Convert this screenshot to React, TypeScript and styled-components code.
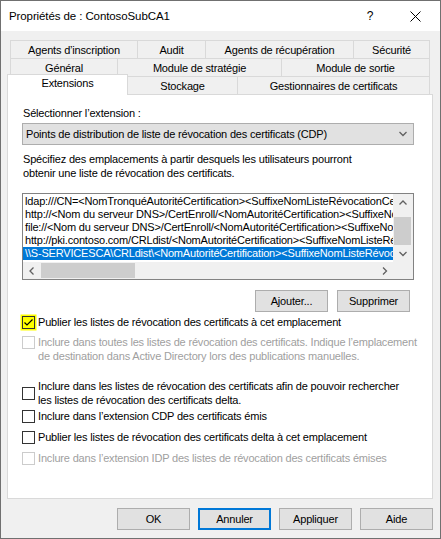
import React from 'react';
import styled, { createGlobalStyle, css } from 'styled-components';

const face = '#f0f0f0';
const line = '#d9d9d9';
const btnFace = '#e1e1e1';
const btnLine = '#adadad';
const accent = '#0078d7';
const grayText = '#a0a0a0';

const Global = createGlobalStyle`
  html, body {
    margin: 0;
    padding: 0;
    background: #ffffff;
  }
  body {
    font-family: "Liberation Sans", Arial, sans-serif;
    font-size: 11px;
    letter-spacing: -0.18px;
    color: #000;
  }
`;

const Window = styled.div`
  width: 441px;
  height: 539px;
  box-sizing: border-box;
  border: 1px solid #707070;
  background: ${face};
  display: flex;
  flex-direction: column;
`;

const TitleBar = styled.div`
  height: 30px;
  flex: none;
  background: #fff;
  display: flex;
  align-items: center;
  padding-left: 8px;
`;

const Title = styled.span`
  flex: 1;
  font-size: 11.5px;
  letter-spacing: -0.1px;
`;

const Help = styled.span`
  width: 40px;
  text-align: center;
  font-size: 12px;
`;

const CloseBtn = styled.span`
  width: 50px;
  display: flex;
  justify-content: center;
  align-items: center;
`;

const Body = styled.div`
  padding: 9px 7px 0 6px;
  display: flex;
  flex-direction: column;
`;

const TabRow = styled.div<{ $inset: number }>`
  display: flex;
  height: 18px;
  margin-left: ${p => p.$inset}px;
`;

const Tab = styled.div<{ $w: number; $active?: boolean }>`
  width: ${p => p.$w}px;
  box-sizing: border-box;
  height: 18px;
  border-top: 1px solid ${line};
  border-right: 1px solid ${line};
  background: ${face};
  display: flex;
  align-items: center;
  justify-content: center;
  white-space: nowrap;
  &:first-child {
    border-left: 1px solid ${line};
  }
  ${p =>
    p.$active &&
    css`
      height: 21px;
      margin-top: -2px;
      margin-bottom: -1px;
      padding-bottom: 4px;
      background: #fff;
      position: relative;
      z-index: 1;
    `}
`;

const Panel = styled.div`
  height: 405px;
  box-sizing: border-box;
  background: #fff;
  border: 1px solid ${line};
  padding: 11px 0 0 14px;
  display: flex;
  flex-direction: column;
  overflow: hidden;
`;

const Label = styled.div`
  line-height: 15px;
  padding-left: 1px;
  white-space: nowrap;
`;

const Combo = styled.div`
  width: 392px;
  height: 22px;
  margin-top: 2px;
  box-sizing: border-box;
  border: 1px solid ${btnLine};
  background: ${btnFace};
  display: flex;
  align-items: center;
  padding: 0 6px 0 3px;
  white-space: nowrap;
  svg {
    margin-left: auto;
  }
`;

const Para = styled.div`
  margin-top: 7px;
  line-height: 14px;
  padding-left: 1px;
  white-space: nowrap;
`;

const ListBox = styled.div`
  width: 392px;
  height: 87px;
  margin-top: 13px;
  box-sizing: border-box;
  border: 1px solid #828282;
  display: grid;
  grid-template-columns: minmax(0, 1fr) 20px;
  grid-template-rows: minmax(0, 1fr) 17px;
`;

const Items = styled.div`
  padding-top: 1px;
  overflow: hidden;
  min-width: 0;
`;

const Item = styled.div<{ $selected?: boolean }>`
  height: 13px;
  line-height: 13px;
  padding-left: 2px;
  white-space: nowrap;
  overflow: hidden;
  background: ${p => (p.$selected ? accent : 'transparent')};
  color: ${p => (p.$selected ? '#fff' : '#000')};
`;

const VScroll = styled.div`
  background: ${face};
  display: flex;
  flex-direction: column;
`;

const HScroll = styled.div`
  background: ${face};
  display: flex;
`;

const Corner = styled.div`
  background: ${face};
`;

const Arrow = styled.div<{ $wide?: boolean }>`
  flex: none;
  width: ${p => (p.$wide ? '17px' : 'auto')};
  height: ${p => (p.$wide ? 'auto' : '17px')};
  display: flex;
  align-items: center;
  justify-content: center;
`;

const Track = styled.div<{ $vertical?: boolean }>`
  flex: 1;
  display: flex;
  flex-direction: ${p => (p.$vertical ? 'column' : 'row')};
`;

const Thumb = styled.div<{ $vertical?: boolean; $offset: number; $size: number }>`
  background: #cdcdcd;
  flex: none;
  ${p =>
    p.$vertical
      ? css`
          margin: ${p.$offset}px 0 0 1px;
          height: ${p.$size}px;
          width: 17px;
        `
      : css`
          margin: 1px 0 0 ${p.$offset}px;
          width: ${p.$size}px;
          height: 15px;
        `}
`;

const ButtonRow = styled.div<{ $top: number; $right: number }>`
  display: flex;
  justify-content: flex-end;
  gap: 9px;
  margin-top: ${p => p.$top}px;
  padding-right: ${p => p.$right}px;
`;

const Button = styled.div<{ $default?: boolean }>`
  width: 73px;
  height: 22px;
  box-sizing: border-box;
  background: ${btnFace};
  border: ${p => (p.$default ? `2px solid ${accent}` : `1px solid ${btnLine}`)};
  display: flex;
  align-items: center;
  justify-content: center;
`;

const CheckRow = styled.div<{ $top: number; $center?: boolean; $disabled?: boolean }>`
  display: flex;
  align-items: ${p => (p.$center ? 'center' : 'flex-start')};
  gap: 3px;
  margin-top: ${p => p.$top}px;
  line-height: 14px;
  white-space: nowrap;
  color: ${p => (p.$disabled ? grayText : '#000')};
`;

const Box = styled.span<{ $disabled?: boolean; $marked?: boolean; $center?: boolean }>`
  flex: none;
  width: 13px;
  height: 13px;
  box-sizing: border-box;
  margin-top: ${p => (p.$center ? 0 : 1)}px;
  border: 1px solid ${p => (p.$disabled ? '#cccccc' : '#333333')};
  background: ${p => (p.$marked ? '#ffff00' : '#fff')};
  box-shadow: ${p => (p.$marked ? '0 0 0 1.5px #ffff00' : 'none')};
  display: flex;
  align-items: center;
  justify-content: center;
`;

const Footer = styled.div`
  display: flex;
  justify-content: flex-end;
  gap: 8px;
  margin-top: 9px;
`;

const Chevron = ({ dir }: { dir: 'up' | 'down' | 'left' | 'right' }) => {
  const pts = {
    up: '0.5,4.5 4,1 7.5,4.5',
    down: '0.5,1 4,4.5 7.5,1',
    left: '4.5,0.5 1,4 4.5,7.5',
    right: '1,0.5 4.5,4 1,7.5',
  }[dir];
  const vertical = dir === 'up' || dir === 'down';
  return (
    <svg width={vertical ? 8 : 6} height={vertical ? 6 : 8} viewBox={vertical ? '0 0 8 6' : '0 0 6 8'}>
      <polyline points={pts} fill="none" stroke="#606060" strokeWidth="1.3" />
    </svg>
  );
};

const entries = [
  'ldap:///CN=<NomTronquéAutoritéCertification><SuffixeNomListeRévocationCertificats>,CN=<NomServeurCourt>,CN=CDP,CN=Public Key Services,CN=Services,<DomaineConfiguration><NomObjetCDP><ClasseObjetCDP>',
  'http://<Nom du serveur DNS>/CertEnroll/<NomAutoritéCertification><SuffixeNomListeRévocationCertificats><DeltaCRLAllowed>.crl',
  'file://<Nom du serveur DNS>/CertEnroll/<NomAutoritéCertification><SuffixeNomListeRévocationCertificats><DeltaCRLAllowed>.crl',
  'http://pki.contoso.com/CRLdist/<NomAutoritéCertification><SuffixeNomListeRévocationCertificats>.crl',
  '\\\\S-SERVICESCA\\CRLdist\\<NomAutoritéCertification><SuffixeNomListeRévocationCertificats>.crl',
];

const tabRows: { inset: number; tabs: [string, number][] }[] = [
  {
    inset: 3,
    tabs: [
      ['Agents d’inscription', 128],
      ['Audit', 68],
      ['Agents de récupération', 148],
      ['Sécurité', 76],
    ],
  },
  {
    inset: 3,
    tabs: [
      ['Général', 108],
      ['Module de stratégie', 164],
      ['Module de sortie', 148],
    ],
  },
  {
    inset: 0,
    tabs: [
      ['Extensions', 121],
      ['Stockage', 110],
      ['Gestionnaires de certificats', 192],
    ],
  },
];

type Opt = {
  text: React.ReactNode;
  top: number;
  checked?: boolean;
  disabled?: boolean;
  center?: boolean;
};

const options: Opt[] = [
  { text: 'Publier les listes de révocation des certificats à cet emplacement', top: 3, checked: true },
  {
    text: (
      <>
        Inclure dans toutes les listes de révocation des certificats. Indique l’emplacement
        <br />
        de destination dans Active Directory lors des publications manuelles.
      </>
    ),
    top: 6,
    disabled: true,
  },
  {
    text: (
      <>
        Inclure dans les listes de révocation des certificats afin de pouvoir rechercher
        <br />
        les listes de révocation des certificats delta.
      </>
    ),
    top: 16,
    center: true,
  },
  { text: 'Inclure dans l’extension CDP des certificats émis', top: 2 },
  { text: 'Publier les listes de révocation des certificats delta à cet emplacement', top: 7 },
  { text: 'Inclure dans l’extension IDP des listes de révocation des certificats émises', top: 7, disabled: true },
];

export default function App() {
  return (
    <>
      <Global />
      <Window>
        <TitleBar>
          <Title>Propriétés de : ContosoSubCA1</Title>
          <Help>?</Help>
          <CloseBtn>
            <svg width="11" height="11" viewBox="0 0 11 11">
              <path d="M0.5 0.5 L10.5 10.5 M10.5 0.5 L0.5 10.5" stroke="#000" strokeWidth="1" />
            </svg>
          </CloseBtn>
        </TitleBar>
        <Body>
          {tabRows.map((row, i) => (
            <TabRow key={i} $inset={row.inset}>
              {row.tabs.map(([name, w]) => (
                <Tab key={name} $w={w} $active={name === 'Extensions'}>
                  {name}
                </Tab>
              ))}
            </TabRow>
          ))}
          <Panel>
            <Label>Sélectionner l’extension :</Label>
            <Combo>
              Points de distribution de liste de révocation des certificats (CDP)
              <Chevron dir="down" />
            </Combo>
            <Para>
              Spécifiez des emplacements à partir desquels les utilisateurs pourront
              <br />
              obtenir une liste de révocation des certificats.
            </Para>
            <ListBox>
              <Items>
                {entries.map((e, i) => (
                  <Item key={i} $selected={i === entries.length - 1}>
                    {e}
                  </Item>
                ))}
              </Items>
              <VScroll>
                <Arrow>
                  <Chevron dir="up" />
                </Arrow>
                <Track $vertical>
                  <Thumb $vertical $offset={6} $size={28} />
                </Track>
                <Arrow>
                  <Chevron dir="down" />
                </Arrow>
              </VScroll>
              <HScroll>
                <Arrow $wide>
                  <Chevron dir="left" />
                </Arrow>
                <Track>
                  <Thumb $offset={1} $size={94} />
                </Track>
                <Arrow $wide>
                  <Chevron dir="right" />
                </Arrow>
              </HScroll>
              <Corner />
            </ListBox>
            <ButtonRow $top={10} $right={22}>
              <Button>Ajouter...</Button>
              <Button>Supprimer</Button>
            </ButtonRow>
            {options.map((o, i) => (
              <CheckRow key={i} $top={o.top} $center={o.center} $disabled={o.disabled}>
                <Box $disabled={o.disabled} $marked={o.checked} $center={o.center}>
                  {o.checked && (
                    <svg width="11" height="11" viewBox="0 0 11 11">
                      <polyline points="1.5,5.5 4,8 9.5,2.5" fill="none" stroke="#000" strokeWidth="1.2" />
                    </svg>
                  )}
                </Box>
                <span>{o.text}</span>
              </CheckRow>
            ))}
          </Panel>
          <Footer>
            <Button>OK</Button>
            <Button $default>Annuler</Button>
            <Button>Appliquer</Button>
            <Button>Aide</Button>
          </Footer>
        </Body>
      </Window>
    </>
  );
}
